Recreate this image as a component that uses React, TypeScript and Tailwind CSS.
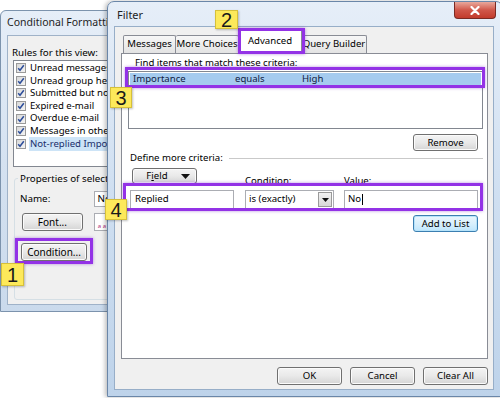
import React from "react";

function Btn({ children, className = "" }: { children: React.ReactNode; className?: string }) {
  return (
    <div
      className={`flex items-center justify-center rounded-[3px] border border-[#707070] bg-linear-to-b from-[#f4f4f4] via-[#e9e9e9] to-[#d5d5d5] text-[9.6px] leading-none text-black shadow-[inset_0_0_0_1px_#fbfbfb] ${className}`}
    >
      {children}
    </div>
  );
}

function Check() {
  return (
    <div className="flex h-[10px] w-[10px] shrink-0 items-center justify-center border border-[#9a9a9a] bg-linear-to-br from-[#d8d8d8] to-[#f4f4f4]">
      <svg width="8" height="8" viewBox="0 0 8 8">
        <path d="M1.2 4.2 L3 6.2 L6.8 1.2" fill="none" stroke="#2c4d9a" strokeWidth="1.5" />
      </svg>
    </div>
  );
}

function Label({ n, className }: { n: string; className: string }) {
  return (
    <div
      className={`absolute z-30 flex items-center justify-center border border-[#d6c03a] bg-[#fde95a] font-['Liberation_Sans',sans-serif] text-[20px] leading-none text-[#1a1a1a] shadow-[1px_1px_2px_rgba(0,0,0,0.25)] ${className}`}
    >
      {n}
    </div>
  );
}

function PurpleBox({ className }: { className: string }) {
  return (
    <div
      className={`pointer-events-none absolute z-20 border-[3px] border-[#9332e6] shadow-[0_0_3px_rgba(120,40,200,0.5)] ${className}`}
    />
  );
}

export default function App() {
  const rules = [
    "Unread messages",
    "Unread group headers",
    "Submitted but not sent",
    "Expired e-mail",
    "Overdue e-mail",
    "Messages in other folders",
  ];
  return (
    <div className="relative h-[398px] w-[500px] overflow-hidden bg-white font-['Noto_Sans',sans-serif] text-[9.6px] text-black">
      {/* Left dialog: Conditional Formatting */}
      <div className="absolute left-0 top-[10px] z-0 flex h-[302px] w-[135px] flex-col rounded-t-[6px] border border-[#7c93ad] bg-linear-to-b from-[#e6eef8] via-[#d5e2f1] to-[#cadaec]">
        <div className="flex h-[24px] items-center pl-[6px] text-[10.5px] whitespace-nowrap text-[#1e1e1e]">Conditional Formatting</div>
        <div className="ml-[6px] flex h-[270px] flex-col border border-[#9fb2c8] bg-[#f0f0f0] pl-[4px]">
          <div className="mt-[10px] h-[13px] leading-[13px] text-[9.8px]">Rules for this view:</div>
          <div className="ml-[1px] mt-[1px] flex h-[107px] flex-col border border-[#828790] bg-white pl-[2px] pt-[1px]">
            {rules.map((r) => (
              <div key={r} className="flex h-[12.6px] items-center gap-[4px] whitespace-nowrap text-[9.6px]">
                <Check />
                <span>{r}</span>
              </div>
            ))}
            <div className="flex h-[12.6px] items-center gap-[3px] whitespace-nowrap text-[9.6px]">
              <Check />
              <span className="bg-[#cde4f7] pl-[1px] pr-[2px] text-[#1b2f6b]">Not-replied Important</span>
            </div>
          </div>
          <div className="relative ml-[2px] mt-[11px] h-[122px] rounded-[3px] border border-[#d5dfe5]">
            <div className="absolute -top-[7px] left-[3px] bg-[#f0f0f0] px-[2px] leading-[13px] text-[9.8px] whitespace-nowrap">
              Properties of selected view
            </div>
            <div className="mt-[12px] flex items-center text-[9.8px]">
              <span className="ml-[5px] w-[77px]">Name:</span>
              <div className="flex h-[16px] w-[40px] items-center overflow-hidden border border-[#abadb3] bg-white pl-[3px] whitespace-nowrap">
                Not-replied
              </div>
            </div>
            <div className="mt-[6px] flex items-center">
              <Btn className="ml-[7px] h-[18px] w-[64px] text-[10px]">Font...</Btn>
              <div className="ml-[11px] flex h-[18px] w-[40px] items-end border border-[#abadb3] bg-white pb-[1px] pl-[3px]">
                <span className="text-[6px] leading-none text-[#b0307a]">a a</span>
              </div>
            </div>
            <Btn className="ml-[6px] mt-[12px] h-[18px] w-[66px] text-[10px]">Condition...</Btn>
          </div>
        </div>
      </div>

      {/* Filter dialog */}
      <div className="absolute left-[107px] top-[1px] z-10 flex h-[396px] w-[396px] flex-col rounded-t-[7px] border border-[#6a86a8] bg-linear-to-b from-[#e6eef8] via-[#cfdff1] to-[#bed3ea] shadow-[-2px_0_4px_rgba(0,0,0,0.25)]">
        <div className="flex h-[24px] items-start justify-between">
          <div className="mt-[5px] pl-[9px] text-[11px] text-[#1e1e1e]">Filter</div>
          <div className="mr-[6px] flex h-[17px] w-[42px] items-center justify-center rounded-b-[4px] border border-t-0 border-[#7a2a23] bg-linear-to-b from-[#e8a89c] via-[#d0574a] to-[#c23b2c]">
            <svg width="10" height="9" viewBox="0 0 10 9">
              <path d="M1.5 1 L8.5 8 M8.5 1 L1.5 8" stroke="#ffffff" strokeWidth="2.2" strokeLinecap="round" />
            </svg>
          </div>
        </div>
        <div className="ml-[6px] flex h-[364px] w-[380px] flex-col border border-[#97aec8] bg-[#f0f0f0] pl-[6px]">
          {/* tabs */}
          <div className="relative z-10 mt-[1px] flex h-[25px] items-end pl-[2px]">
            <div className="flex h-[18px] w-[53px] items-center justify-center rounded-t-[2px] border border-b-0 border-[#898c95] bg-linear-to-b from-[#f7f7f7] to-[#e3e3e3]">
              Messages
            </div>
            <div className="flex h-[18px] w-[63px] items-center justify-center whitespace-nowrap rounded-t-[2px] border border-b-0 border-l-0 border-[#898c95] bg-linear-to-b from-[#f7f7f7] to-[#e3e3e3]">
              More Choices
            </div>
            <div className="-mb-px flex h-[25px] w-[63px] items-center justify-center rounded-t-[2px] border border-b-0 border-l-0 border-[#898c95] bg-white pb-[2px]">
              Advanced
            </div>
            <div className="flex h-[18px] w-[65px] items-center justify-center whitespace-nowrap rounded-t-[2px] border border-b-0 border-l-0 border-[#898c95] bg-linear-to-b from-[#f7f7f7] to-[#e3e3e3]">
              Query Builder
            </div>
          </div>
          {/* panel */}
          <div className="flex h-[306px] w-[367px] flex-col border border-[#898c95] bg-white">
            <div className="ml-[13px] mt-[3px] h-[12px] leading-[12px]">Find items that match these criteria:</div>
            <div className="ml-[6px] mt-[2px] h-[58px] w-[355px] border border-[#828790] bg-white p-px">
              <div className="flex h-[13px] items-center bg-[#a5cbef] pl-[3px] text-[#10203f]">
                <span className="w-[102px]">Importance</span>
                <span className="w-[67px]">equals</span>
                <span>High</span>
              </div>
            </div>
            <Btn className="ml-[291px] mt-[5px] h-[17px] w-[65px]">Remove</Btn>
            <div className="ml-[8px] mt-[1px] flex h-[12px] items-center">
              <span className="whitespace-nowrap">Define more criteria:</span>
              <div className="ml-[6px] h-px w-[254px] bg-[#c9c9c9]" />
            </div>
            <div className="ml-[10px] mt-[4px] flex h-[16px] w-[65px]">
              <Btn className="h-[16px] w-[65px] justify-between">
                <span className="flex-1 text-center">
                  F<span className="underline">i</span>eld
                </span>
                <svg width="9" height="5" viewBox="0 0 9 5" className="mr-[6px]">
                  <path d="M0 0 H9 L4.5 5 Z" fill="#111" />
                </svg>
              </Btn>
            </div>
            <div className="-mt-[9px] ml-[8px] grid h-[12px] grid-cols-[104px_89px_133px] gap-x-[11px] leading-[12px]">
              <span />
              <span>Condition:</span>
              <span className="-ml-px">Value:</span>
            </div>
            <div className="ml-[8px] mt-[3px] grid h-[19px] grid-cols-[104px_89px_133px] gap-x-[11px]">
              <div className="flex items-center border border-[#abadb3] bg-white pl-[4px]">Replied</div>
              <div className="flex items-center justify-between border border-[#abadb3] bg-white pl-[3px] pr-px">
                <span className="whitespace-nowrap">is (exactly)</span>
                <div className="flex h-[15px] w-[14px] items-center justify-center border border-[#9a9a9a] bg-linear-to-b from-[#f2f2f2] to-[#d8d8d8]">
                  <svg width="7" height="4" viewBox="0 0 7 4">
                    <path d="M0 0 H7 L3.5 4 Z" fill="#111" />
                  </svg>
                </div>
              </div>
              <div className="-ml-px flex items-center border border-[#abadb3] bg-white pl-[3px]">
                No<span className="ml-px inline-block h-[11px] w-px bg-black" />
              </div>
            </div>
            <div className="ml-[291px] mt-[6px] flex h-[17px] w-[65px] items-center justify-center rounded-[3px] border border-[#3c7fb1] bg-linear-to-b from-[#eaf6fd] via-[#d9f0fc] to-[#bee6fd] text-[9.6px] leading-none shadow-[inset_0_0_0_1px_#b6e3fa]">
              Add to List
            </div>
          </div>
          <div className="mt-[8px] flex w-[367px] justify-end gap-[8px]">
            <Btn className="h-[18px] w-[65px]">OK</Btn>
            <Btn className="h-[18px] w-[65px]">Cancel</Btn>
            <Btn className="h-[18px] w-[65px]">Clear All</Btn>
          </div>
        </div>
      </div>

      {/* annotations */}
      <PurpleBox className="left-[238px] top-[28px] h-[26px] w-[67px]" />
      <PurpleBox className="left-[125px] top-[67px] h-[21px] w-[360px]" />
      <PurpleBox className="left-[123px] top-[183px] h-[28px] w-[360px]" />
      <PurpleBox className="left-[15px] top-[238px] h-[26px] w-[78px]" />
      <Label n="2" className="left-[215px] top-[10px] h-[19px] w-[23px]" />
      <Label n="3" className="left-[110px] top-[87px] h-[21px] w-[22px]" />
      <Label n="4" className="left-[105px] top-[199px] h-[21px] w-[22px]" />
      <Label n="1" className="left-[1px] top-[263px] h-[23px] w-[23px]" />
    </div>
  );
}
